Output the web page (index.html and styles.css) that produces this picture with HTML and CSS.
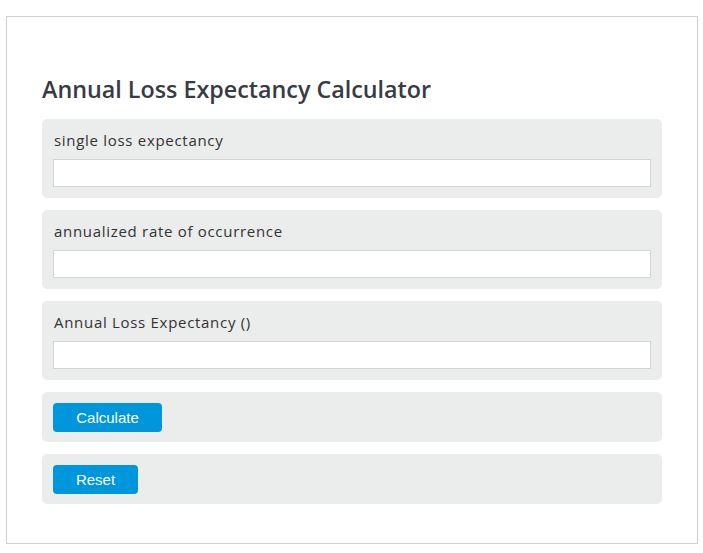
FILE: index.html
```html
<!DOCTYPE html>
<html lang="en">
<head>
  <meta charset="UTF-8" />
  <title>Annual Loss Expectancy Calculator</title>
  <link rel="stylesheet" href="styles.css">
</head>
<body>
  <div class="caixa">
    <h2 class="titulo">Annual Loss Expectancy Calculator</h2>
    <div class="campo">
      <label for="sle">single loss expectancy</label>
      <input type="text" id="sle">
    </div>
    <div class="campo">
      <label for="aro">annualized rate of occurrence</label>
      <input type="text" id="aro">
    </div>
    <div class="campo">
      <label for="ale">Annual Loss Expectancy ()</label>
      <input type="text" id="ale">
    </div>
    <div class="campo acoes">
      <button class="btn btn-calc">Calculate</button>
    </div>
    <div class="campo acoes">
      <button class="btn btn-reset">Reset</button>
    </div>
  </div>
</body>
</html>
```

FILE: styles.css
```css
* { box-sizing: border-box; }
body {
  margin: 0;
  padding: 16px 6px 9px 6px;
  background-color: #fff;
  font-family: "Open Sans", sans-serif;
}
.caixa {
  width: 692px;
  height: 528px;
  border: 1px solid #cfcfcf;
  padding: 57px 35px 20px 35px;
}
.titulo {
  margin: 0 0 15px 0;
  font-size: 23.3px;
  font-weight: 600;
  line-height: 30px;
  color: #373b44;
}
.campo {
  background-color: #ebecec;
  border-radius: 5px;
  padding: 11px;
  margin-bottom: 12px;
}
.campo label {
  display: block;
  font-size: 15px;
  line-height: 20px;
  color: #333;
  letter-spacing: 0.7px;
  padding-left: 1px;
  margin-bottom: 9px;
}
.campo input {
  display: block;
  width: 100%;
  height: 28px;
  border: 1px solid #d4d4d4;
  background-color: #fff;
  font-size: 15px;
}
.acoes {
  padding: 11px 11px 10px 11px;
}
.btn {
  display: block;
  height: 29px;
  border: none;
  border-radius: 4px;
  background-color: #0096db;
  color: #fff;
  font-family: "Liberation Sans", Arial, sans-serif;
  font-size: 15px;
  cursor: pointer;
}
.btn-calc { width: 109px; }
.btn-reset { width: 85px; }
```
